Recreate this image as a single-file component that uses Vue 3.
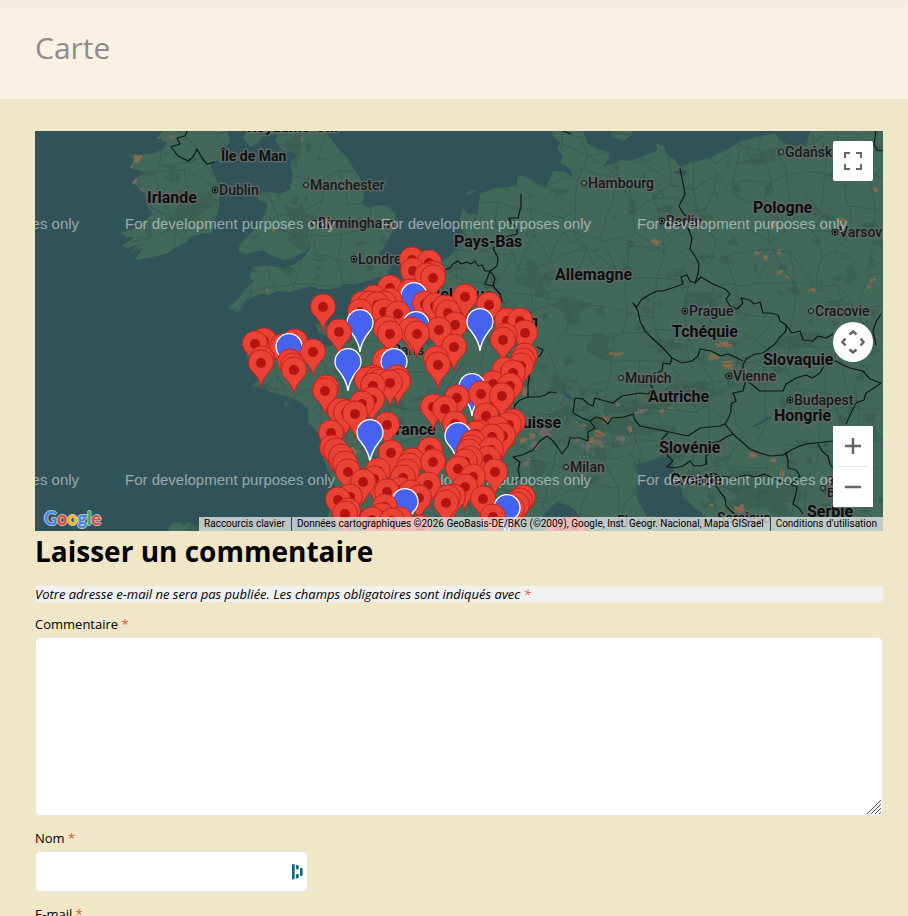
<script setup>
import { ref } from 'vue'

const comment = ref('')
const author = ref('')
const email = ref('')

// Small seeded generator so that the terrain texture is the same on every load
function seeded(seed) {
  let s = seed
  return () => {
    s = (s * 16807) % 2147483647
    return s / 2147483647
  }
}

function buildRoads() {
  const rnd = seeded(4217)
  const cols = 34
  const rows = 17
  const pts = []
  for (let r = 0; r < rows; r++) {
    for (let c = 0; c < cols; c++) {
      pts.push([35 + c * 26 + (rnd() - 0.5) * 24, 128 + r * 26 + (rnd() - 0.5) * 24])
    }
  }
  let d = ''
  const link = (a, b) => {
    const mx = (a[0] + b[0]) / 2 + (rnd() - 0.5) * 10
    const my = (a[1] + b[1]) / 2 + (rnd() - 0.5) * 10
    d += `M${a[0].toFixed(1)} ${a[1].toFixed(1)}Q${mx.toFixed(1)} ${my.toFixed(1)} ${b[0].toFixed(1)} ${b[1].toFixed(1)}`
  }
  for (let r = 0; r < rows; r++) {
    for (let c = 0; c < cols; c++) {
      const p = pts[r * cols + c]
      if (c < cols - 1 && rnd() < 0.72) link(p, pts[r * cols + c + 1])
      if (r < rows - 1 && rnd() < 0.72) link(p, pts[(r + 1) * cols + c])
      if (c < cols - 1 && r < rows - 1 && rnd() < 0.22) link(p, pts[(r + 1) * cols + c + 1])
    }
  }
  return d
}

function blob(rnd, x, y, w, h) {
  const n = 13
  let d = ''
  for (let i = 0; i < n; i++) {
    const a = (i / n) * Math.PI * 2
    const k = 0.3 + rnd() * 0.8
    d += `${i ? 'L' : 'M'}${(x + Math.cos(a) * w * k).toFixed(1)} ${(y + Math.sin(a) * h * k).toFixed(1)}`
  }
  return d + 'Z'
}

function buildForests() {
  const rnd = seeded(991)
  let d = ''
  for (let i = 0; i < 420; i++) {
    d += blob(rnd, 35 + rnd() * 848, 131 + rnd() * 400, 2 + rnd() * 9, 2 + rnd() * 5)
  }
  return d
}

function buildPatches(spots) {
  const rnd = seeded(77)
  return spots.map(([x, y, w, h]) => blob(rnd, x, y, w, h)).join('')
}

const roads = buildRoads()
const forests = buildForests()
const highlands = buildPatches([
  [190, 215, 30, 26], [300, 225, 22, 30], [295, 150, 14, 20], [535, 280, 26, 22], [570, 310, 24, 14],
  [600, 345, 20, 14], [690, 395, 40, 12], [640, 408, 40, 12], [610, 425, 40, 14], [760, 160, 26, 14],
  [800, 340, 34, 12], [740, 480, 40, 16], [770, 500, 40, 18], [865, 440, 14, 20], [560, 385, 18, 12],
  [535, 470, 16, 20], [665, 345, 22, 10], [700, 300, 26, 10], [640, 430, 30, 10], [860, 350, 22, 12]
])
const ochre = buildPatches([
  [137, 160, 7, 6], [133, 180, 7, 4], [141, 190, 5, 4], [172, 137, 5, 2], [273, 230, 3, 3], [267, 290, 2, 2],
  [655, 243, 7, 4], [758, 253, 4, 3], [766, 258, 4, 5], [779, 253, 3, 5], [780, 272, 5, 3], [787, 277, 4, 2],
  [813, 290, 5, 3], [872, 280, 5, 3], [869, 287, 4, 3], [875, 189, 5, 3], [842, 220, 5, 3], [774, 225, 5, 4],
  [617, 354, 8, 3], [722, 345, 12, 5], [713, 357, 7, 5], [729, 365, 8, 5], [630, 430, 3, 4], [606, 419, 6, 5],
  [599, 435, 9, 5], [592, 441, 7, 4], [583, 426, 4, 3], [670, 408, 4, 2], [754, 455, 8, 3], [772, 460, 5, 3],
  [782, 473, 4, 5], [740, 509, 7, 5], [525, 390, 5, 6], [523, 440, 6, 4], [532, 436, 5, 4], [712, 505, 4, 2],
  [353, 452, 7, 5], [662, 411, 3, 4]
])
const rock = buildPatches([
  [641, 412, 8, 4], [618, 404, 4, 3], [622, 439, 8, 5], [600, 443, 9, 6], [586, 447, 8, 4], [545, 432, 9, 6],
  [535, 446, 6, 5], [303, 139, 3, 4], [131, 167, 3, 4], [160, 138, 3, 2], [527, 462, 6, 6], [577, 440, 5, 3]
])

const borders = [
  '187,131 185,136 177,138 180,144 171,147 178,156 188,161 193,157 197,149 202,158 207,164 215,162',
  '521,194 521,206 518,218 509,218 511,223 517,228 517,234 505,237 507,244 493,248 498,258 497,266 490,271 485,284 493,286 495,278 490,271',
  '493,286 500,294 502,301 498,310',
  '444,270 450,268 453,264 458,261 461,264 467,262 471,264 475,261 478,266 482,265 485,271 490,271',
  '563,131 571,134',
  '680,168 682,178 685,194 682,200 679,206 683,213 688,218 688,228 692,238 690,249 695,256 699,264 698,274 695,283',
  '663,291 675,287 683,284 681,277 687,275 690,281 695,283 701,277 706,280 713,284 720,287 725,289 730,294 726,299 730,306 737,309 743,303 741,298 750,300 754,304 760,302 763,313 770,313 778,315 780,321 786,325 786,331',
  '663,291 657,291 647,296 641,300 637,307 633,303 638,311 640,321 645,331 653,339 663,348 672,358 682,363 692,361 698,356 700,349 711,351 721,356 728,354 735,357 743,361',
  '672,358 670,364 663,363 662,371 653,374 650,383 653,389 648,394 640,393 634,394 622,396 613,403 605,401 595,398 593,406 588,404 583,399 575,398 573,413',
  '573,413 582,418 590,421 596,417 603,419 608,424 612,418 624,417 633,414 635,420 640,426 660,430 688,436 700,428 720,426 725,424',
  '590,421 595,428 588,432 588,441 580,438 570,438 568,446 562,454 557,446 552,440 547,436 540,441 533,450 522,455 513,457 520,462 518,470 520,478 512,483',
  '537,347 543,350 540,356 533,358 530,370 528,385 528,397 520,400 515,405 513,415',
  '528,397 538,397 545,395 550,392 557,393',
  '668,433 662,439 664,448 668,456 673,461 667,467 674,468 683,466 690,461 694,466 700,466 707,464 706,458',
  '786,331 780,337 775,344 763,353 755,354 746,359 743,365 743,371 747,378 750,383 760,391 783,391 786,384 796,378 806,375 812,378 820,373 825,364 836,361 843,365 850,368 863,371 870,379 881,383',
  '786,325 792,333 800,331 803,340 813,341 818,336 826,338 833,334',
  '743,371 745,383 743,391 733,393 736,401 731,404 731,412 728,419 725,424 733,434',
  '733,434 741,441 750,449 760,453 770,456 783,455 791,450 800,446 806,444 816,443 833,441',
  '881,383 874,388 866,393 864,400 856,403 851,413 846,424',
  '818,444 822,451 828,456 830,464 833,468',
  '786,453 788,460 788,468 796,470 800,476 796,480 791,484 797,487 796,494 793,504 799,508 803,514',
  '706,478 713,473 720,476 736,478 745,475 756,477 764,474 773,478 783,482 791,484',
  '733,434 726,437 720,441 712,443 713,450 706,456 706,464',
  '715,484 720,492 725,498 726,506 731,511 740,518',
  '876,131 874,144 877,150 883,151',
  '881,314 876,322 873,331 876,345'
]

const countries = [
  ['Royaume-Uni', 247, 132, 15], ['Île de Man', 221, 161, 14], ['Irlande', 147, 203, 16], ['Pays-Bas', 454, 247, 16],
  ['Belgique', 430, 300, 16], ['Luxembourg', 454, 326, 15], ['Allemagne', 555, 280, 16], ['Pologne', 753, 213, 16],
  ['Tchéquie', 672, 337, 16], ['Slovaquie', 763, 365, 16], ['Autriche', 648, 402, 16], ['Hongrie', 774, 421, 16],
  ['Slovénie', 659, 453, 16], ['Croatie', 670, 485, 16], ['Serbie', 807, 517, 16], ['France', 387, 435, 16],
  ['Suisse', 513, 428, 16]
]
const cities = [
  ['Dublin', 215, 190, 1], ['Manchester', 306, 185, 0], ['Birmingham', 314, 223, 0], ['Londres', 354, 259, 1],
  ['Hambourg', 584, 183, 0], ['Berlin', 662, 221, 1], ['Gdańsk', 781, 152, 0], ['Varsovie', 835, 232, 1],
  ['Prague', 685, 311, 1], ['Cracovie', 811, 311, 0], ['Vienne', 729, 376, 1], ['Munich', 621, 378, 0],
  ['Budapest', 790, 400, 1], ['Milan', 566, 467, 0], ['Paris', 388, 350, 1], ['Florence', 613, 521, 0]
]
const watermarks = [223, 479].flatMap(y => [-131, 125, 381, 637].map(x => [x, y + 6]))

const red = [
  [412, 260], [429, 263], [413, 271], [427, 276], [433, 274], [433, 278], [390, 288], [323, 307], [374, 298], [363, 304],
  [370, 304], [377, 305], [384, 304], [390, 301], [398, 314], [384, 312], [360, 312], [410, 292], [425, 304], [435, 306],
  [448, 313], [339, 332], [455, 325], [439, 330], [445, 308], [417, 334], [411, 330], [390, 334], [386, 329], [465, 297],
  [489, 305], [507, 321], [520, 321], [525, 333], [503, 340], [505, 336], [255, 344], [264, 341], [261, 363], [262, 359],
  [295, 342], [282, 347], [313, 352], [294, 370], [293, 366], [290, 362], [325, 391], [326, 388], [367, 380], [372, 378],
  [377, 380], [373, 386], [380, 382], [385, 361], [372, 400], [362, 404], [355, 414], [346, 413], [340, 411], [331, 433],
  [387, 425], [391, 453], [332, 448], [336, 451], [341, 457], [345, 464], [348, 472], [378, 471], [374, 479], [363, 482],
  [350, 497], [338, 500], [345, 514], [348, 511], [387, 492], [385, 507], [372, 520], [382, 516], [454, 347], [436, 359],
  [438, 365], [398, 382], [397, 378], [390, 383], [525, 356], [523, 361], [521, 366], [505, 370], [513, 373], [493, 384],
  [510, 386], [481, 394], [502, 396], [457, 398], [433, 407], [445, 409], [486, 416], [455, 424], [513, 422], [509, 425],
  [497, 429], [492, 437], [503, 436], [480, 433], [476, 434], [473, 443], [471, 448], [469, 452], [491, 450], [488, 459],
  [430, 450], [433, 462], [412, 461], [409, 466], [407, 472], [403, 478], [428, 485], [419, 498], [400, 490], [470, 459],
  [465, 462], [458, 469], [473, 477], [465, 487], [495, 472], [483, 499], [446, 503], [448, 498], [453, 497], [493, 517],
  [523, 498], [520, 501], [517, 505], [512, 509], [400, 520], [392, 521], [411, 493], [559, 531], [573, 530], [420, 528]
]
const blue = [
  [414, 296], [416, 325], [360, 323], [480, 322], [289, 347], [348, 362], [394, 362], [472, 387], [370, 433], [458, 436],
  [405, 502], [507, 508]
]
const markers = [
  ...red.map(([x, y]) => ({ x, y, tip: y + 24, kind: 'red' })),
  ...blue.map(([x, y]) => ({ x, y, tip: y + 28, kind: 'blue' }))
].sort((a, b) => a.tip - b.tip)
</script>

<template>
  <div class="page">
    <header class="page-header">
      <h1 class="page-title">Carte</h1>
    </header>

    <main class="content">
      <section class="map" aria-label="Carte">
        <svg class="map-canvas" viewBox="35 131 848 400" preserveAspectRatio="xMidYMid slice">
          <defs>
            <clipPath id="land-clip">
              <path id="land" d="M163 131L157 138L167 143L163 149L155 153L148 154L139 155L128 154L134 160L130 168L138 170L145 173L136 178L132 183L138 187L145 194L147 206L153 214L146 219L140 226L130 230L120 233L127 237L135 237L122 246L128 248L139 244L130 252L143 248L135 260L150 258L168 253L176 247L185 243L192 236L204 233L212 234L214 224L219 208L219 192L217 181L213 172L210 164L222 158L222 152L230 141L227 131Z
              M247 131L243 138L250 147L258 143L262 137L277 134L275 141L282 150L297 154L292 160L290 168L293 175L290 189L280 194L270 192L260 193L257 199L267 203L267 209L260 223L252 232L240 244L238 251L247 254L262 250L273 256L283 260L290 259L304 252L312 244L305 256L295 264L283 268L266 265L253 268L249 277L254 281L244 290L240 297L228 308L238 313L246 300L260 294L270 295L277 291L290 292L310 286L320 289L333 289L345 284L357 284L373 279L387 275L391 267L381 262L374 259L384 248L393 231L396 214L387 206L376 205L370 208L362 204L364 195L360 178L347 158L338 148L330 138L325 131Z
              M218 160L222 156L226 158L221 164Z
              M326 531L328 515L332 500L335 485L328 470L323 458L320 435L308 422L308 408L298 401L290 397L273 393L262 388L252 386L260 378L250 369L258 364L246 356L248 344L270 340L290 337L300 345L315 349L334 345L329 337L319 333L315 324L328 325L333 334L352 334L367 329L360 320L368 309L390 302L398 295L403 275L418 268L436 266L450 256L457 245L462 232L460 218L463 208L467 214L478 214L480 194L495 188L517 186L517 178L522 175L532 180L545 188L550 178L553 171L565 172L574 178L570 169L560 163L563 156L557 149L560 142L553 136L552 131L583 131L588 144L598 149L610 153L608 160L603 166L615 164L620 160L630 161L640 157L657 151L656 143L664 146L667 155L675 160L680 167L690 163L710 158L730 148L741 141L753 138L775 133L782 142L793 146L806 146L810 131L883 131L883 531L717 531L707 518L695 508L684 497L680 484L674 478L673 464L667 456L655 459L647 462L637 464L638 478L637 498L643 510L657 531L586 531L583 521L573 508L557 501L540 519L530 531Z
              M610 131L613 138L624 140L632 135L632 131Z
              M465 194L470 191L476 190L468 195Z
              M168 531L170 525L178 522L183 524L188 522L195 526L215 528L230 531Z
              M284 401L291 405L285 406Z"/>
            </clipPath>
            <g id="pin-red">
              <path d="M0 24C-1 17-4.500 13-8 9A12.500 12.500 0 1 1 8 9C4.500 13 1 17 0 24Z" fill="#ea4335" stroke="#c5221f" />
              <circle r="5" fill="#b31412" />
            </g>
            <path id="pin-blue" d="M0 29C-1 20-5 14-9 9A13 13 0 1 1 9 9C5 14 1 20 0 29Z" fill="#4862f0" stroke="#fff" stroke-width="1.300" />
          </defs>

          <rect x="35" y="131" width="848" height="400" fill="#325259" />
          <g clip-path="url(#land-clip)">
            <rect x="35" y="131" width="848" height="400" fill="#42685a" />
            <path :d="forests" fill="#3a5c4d" opacity=".75" />
            <path :d="highlands" fill="#3a5b4c" opacity=".6" />
            <path :d="ochre" fill="#85694c" />
            <path :d="rock" fill="#6a6967" />
            <path class="road" :d="roads" />
            <path fill="#325259" d="M752 426L770 416L771 418L755 427ZM561 391L568 394L576 402L566 397ZM676 171L688 170L684 176L672 172ZM475 196L479 204L476 212L472 206Z" />
          </g>
          <polyline v-for="(line, i) in borders" :key="'b' + i" class="border" :points="line" />

          <g class="labels">
            <g v-for="[name, x, y, capital] in cities" :key="name" class="city">
              <circle class="dot" :cx="x" :cy="y" :r="capital ? 3 : 2.500" />
              <circle v-if="capital" :cx="x" :cy="y" r="1.500" />
              <text :x="x + 4" :y="y + 5">{{ name }}</text>
            </g>
            <g class="city small">
              <circle class="dot" cx="823" cy="488" r="2.500" />
              <text x="827" y="485">З</text>
              <text x="827" y="497">Б</text>
            </g>
            <text class="city" x="717" y="523">Sarajevo</text>
            <text v-for="[name, x, y, size] in countries" :key="name" class="country" :x="x" :y="y" :font-size="size">{{ name }}</text>
          </g>

          <text v-for="([x, y], i) in watermarks" :key="'w' + i" class="watermark" :x="x" :y="y">For development purposes only</text>

          <use v-for="(m, i) in markers" :key="'m' + i" :href="'#pin-' + m.kind" :x="m.x" :y="m.y" />
        </svg>

        <a class="logo" href="#" aria-label="Google">
          <span class="g-blue">G</span><span class="g-red">o</span><span class="g-yellow">o</span><span class="g-blue">g</span><span class="g-green">l</span><span class="g-red">e</span>
        </a>

        <button class="control fullscreen" type="button" aria-label="Plein écran">
          <svg width="18" height="18" viewBox="0 0 18 18"><path fill="#666" d="M0 0v6h2V2h4V0H0zM16 0h-4v2h4v4h2V0h-2zM16 16h-4v2h6v-6h-2v4zM2 12H0v6h6v-2H2v-4z" /></svg>
        </button>
        <button class="control camera" type="button" aria-label="Commandes de la caméra">
          <svg width="24" height="24" viewBox="0 0 24 24"><path fill="none" stroke="#666" stroke-width="2.500" d="M8.500 4.500L12 1.500L15.500 4.500M8.500 19.500L12 22.500L15.500 19.500M4.500 8.500L1.500 12L4.500 15.500M19.500 8.500L22.500 12L19.500 15.500" /></svg>
        </button>
        <div class="zoom">
          <button class="control" type="button" aria-label="Zoom avant">
            <svg width="16" height="16" viewBox="0 0 16 16"><path fill="none" stroke="#666" stroke-width="2.500" d="M8 0v16M0 8h16" /></svg>
          </button>
          <span class="zoom-rule"></span>
          <button class="control" type="button" aria-label="Zoom arrière">
            <svg width="16" height="16" viewBox="0 0 16 16"><path fill="none" stroke="#666" stroke-width="2.500" d="M0 8h16" /></svg>
          </button>
        </div>

        <div class="attribution">
          <button type="button">Raccourcis clavier</button>
          <span>Données cartographiques ©2026 GeoBasis-DE/BKG (©2009), Google, Inst. Geogr. Nacional, Mapa GISrael</span>
          <a href="#">Conditions d'utilisation</a>
        </div>
      </section>

      <h2 class="reply-title">Laisser un commentaire</h2>
      <form class="comment-form" @submit.prevent>
        <p class="notes">Votre adresse e-mail ne sera pas publiée. Les champs obligatoires sont indiqués avec <span class="required">*</span></p>
        <div class="field">
          <label for="comment">Commentaire <span class="required">*</span></label>
          <div class="area-wrap">
            <textarea id="comment" v-model="comment" required></textarea>
            <svg class="grip" width="16" height="16" viewBox="0 0 16 16"><path fill="none" stroke="#555" d="M1 15L15 1M5 15L15 5M9 15L15 9M13 15L15 13" /></svg>
          </div>
        </div>
        <div class="field">
          <label for="author">Nom <span class="required">*</span></label>
          <div class="input-wrap">
            <input id="author" v-model="author" type="text" required>
            <svg class="badge" width="12" height="16" viewBox="0 0 12 16"><path fill="#17697b" d="M0 0l2.700 .5v14.500l-2.700 .5zM4 .8l2.700 .7v4.200l-2.700-.7zM4 10.500l2.700-.7v4.200l-2.700 .8zM8 3.800l2.700 .8v6.800l-2.700 .8z" /></svg>
          </div>
        </div>
        <div class="field">
          <label for="email">E-mail <span class="required">*</span></label>
          <div class="input-wrap">
            <input id="email" v-model="email" type="email" required>
          </div>
        </div>
      </form>
    </main>
  </div>
</template>

<style>
body {
  margin: 0;
  background: #f0e6c8;
}
</style>

<style scoped>
.page {
  font-family: "Open Sans", "Noto Sans", sans-serif;
  font-size: 13px;
  line-height: 16px;
  color: #000;
}
.page-header {
  padding: 28px 35px 31px;
  background: linear-gradient(#f3ebde, #f9f2e4 12px);
}
.page-title {
  margin: 0;
  font-size: 30px;
  line-height: 40px;
  font-weight: 400;
  color: #8c8c8c;
}
.content {
  padding: 32px 25px 32px 35px;
}
.map {
  position: relative;
  height: 400px;
  overflow: hidden;
  font-family: Roboto, sans-serif;
}
.map-canvas {
  display: block;
  width: 100%;
  height: 100%;
}
.road {
  fill: none;
  stroke: #35565a;
  stroke-width: 1;
  opacity: 0.7;
}
.border {
  fill: none;
  stroke: #101614;
  stroke-width: 1.200;
  stroke-linejoin: round;
}
.labels text {
  paint-order: stroke;
  stroke: #626a68;
  stroke-opacity: 0.9;
  stroke-width: 3px;
  stroke-linejoin: round;
  fill: #0c0f0f;
}
.labels .country {
  font-weight: 700;
}
.labels .city {
  font-size: 14px;
  font-weight: 500;
}
.labels .city text {
  fill: #171a1a;
}
.labels .small {
  font-size: 12px;
}
.dot {
  fill: #6b7471;
  stroke: #101312;
}
.watermark {
  font-family: "Liberation Sans", Arial, sans-serif;
  font-size: 15px;
  fill: #fff;
  fill-opacity: 0.5;
}
.logo {
  position: absolute;
  left: 9px;
  bottom: 0;
  font-family: Lato, sans-serif;
  font-size: 18px;
  line-height: 26px;
  font-weight: 700;
  text-decoration: none;
  text-shadow: 1px 0 #b9c3c6, -1px 0 #b9c3c6, 0 1px #b9c3c6, 0 -1px #b9c3c6;
}
.g-blue { color: #4285f4; }
.g-red { color: #ea4335; }
.g-yellow { color: #fbbc04; }
.g-green { color: #34a853; }
.control {
  display: flex;
  align-items: center;
  justify-content: center;
  width: 40px;
  height: 40px;
  padding: 0;
  border: 0;
  background: #fff;
}
.fullscreen {
  position: absolute;
  top: 10px;
  right: 10px;
  border-radius: 2px;
}
.camera {
  position: absolute;
  top: 191px;
  right: 10px;
  border-radius: 50%;
}
.zoom {
  position: absolute;
  right: 10px;
  bottom: 24px;
  background: #fff;
}
.zoom-rule {
  display: block;
  height: 1px;
  margin: 0 5px;
  background: #e6e6e6;
}
.attribution {
  position: absolute;
  right: 0;
  bottom: 0;
  display: flex;
  font-size: 10px;
  line-height: 14px;
  white-space: nowrap;
  background: rgba(245, 245, 245, 0.7);
}
.attribution > * {
  padding: 0 6px 0 5px;
  border: 0;
  background: none;
  font: inherit;
  color: #000;
  text-decoration: none;
}
.attribution > * + * {
  border-left: 1px solid #2f4547;
}
.reply-title {
  margin: 0 0 15px;
  font-size: 28px;
  line-height: 40px;
  font-weight: 700;
}
.notes {
  margin: 0 0 14px;
  font-style: italic;
  background: #f1f1f1;
}
.required {
  color: #e2552b;
}
.field {
  margin-bottom: 14px;
}
.field label {
  display: block;
  margin-bottom: 5px;
}
.area-wrap {
  position: relative;
}
.field textarea,
.field input {
  display: block;
  box-sizing: border-box;
  width: 100%;
  padding: 8px 12px;
  border: 1px solid #e6e6e6;
  border-radius: 5px;
  background: #fff;
  font: inherit;
}
.field textarea {
  height: 179px;
  resize: vertical;
}
.field textarea::-webkit-resizer {
  display: none;
}
.grip {
  position: absolute;
  right: 1px;
  bottom: 1px;
  pointer-events: none;
}
.input-wrap {
  position: relative;
  max-width: 273px;
}
.field input {
  height: 41px;
}
.badge {
  position: absolute;
  right: 4px;
  top: 13px;
}
</style>
